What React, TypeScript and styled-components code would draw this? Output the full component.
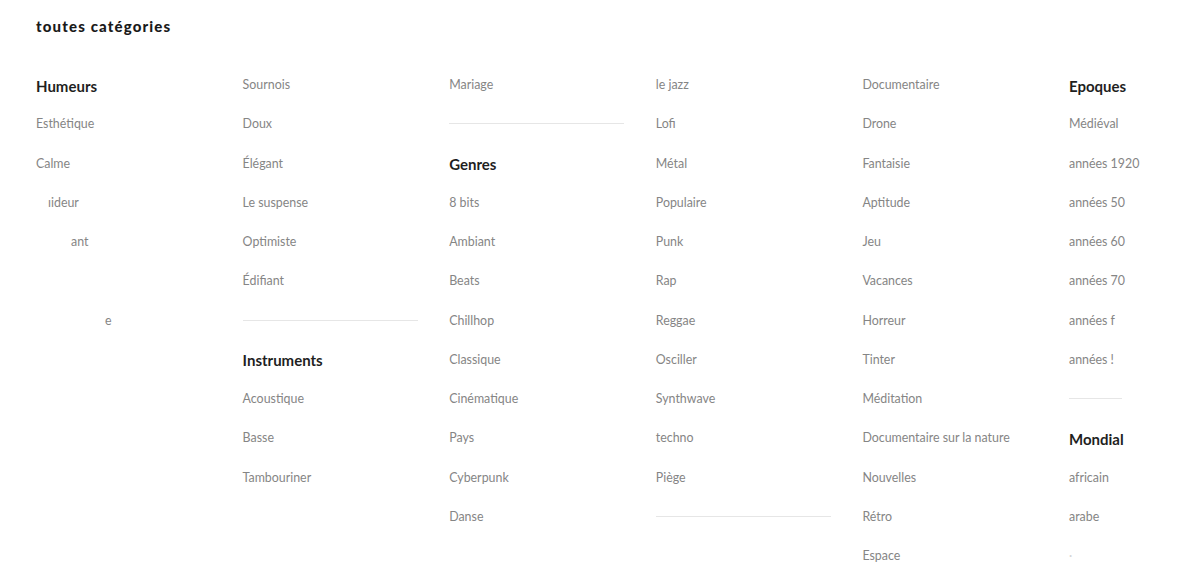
import styled, { createGlobalStyle } from 'styled-components';

type Entry =
  | { kind: 'heading', label: string }
  | { kind: 'item', label: string, indent?: number, faint?: boolean }
  | { kind: 'divider', width?: number }
  | { kind: 'blank' };

const h = (label: string): Entry => ({ kind: 'heading', label });
const i = (label: string, indent?: number): Entry => ({ kind: 'item', label, indent });
const divider = (width?: number): Entry => ({ kind: 'divider', width });
const blank: Entry = { kind: 'blank' };

const columns: Entry[][] = [
  [h('Humeurs'), i('Esthétique'), i('Calme'), i('ıideur', 12), i('ant', 35), blank, i('e', 69)],
  [
    i('Sournois'), i('Doux'), i('Élégant'), i('Le suspense'), i('Optimiste'), i('Édifiant'),
    divider(), h('Instruments'), i('Acoustique'), i('Basse'), i('Tambouriner'),
  ],
  [
    i('Mariage'), divider(), h('Genres'), i('8 bits'), i('Ambiant'), i('Beats'), i('Chillhop'),
    i('Classique'), i('Cinématique'), i('Pays'), i('Cyberpunk'), i('Danse'),
  ],
  [
    i('le jazz'), i('Lofi'), i('Métal'), i('Populaire'), i('Punk'), i('Rap'), i('Reggae'),
    i('Osciller'), i('Synthwave'), i('techno'), i('Piège'), divider(),
  ],
  [
    i('Documentaire'), i('Drone'), i('Fantaisie'), i('Aptitude'), i('Jeu'), i('Vacances'),
    i('Horreur'), i('Tinter'), i('Méditation'), i('Documentaire sur la nature'), i('Nouvelles'),
    i('Rétro'), i('Espace'),
  ],
  [
    h('Epoques'), i('Médiéval'), i('années 1920'), i('années 50'), i('années 60'), i('années 70'),
    i('années f'), i('années !'), divider(53), h('Mondial'), i('africain'), i('arabe'),
    { kind: 'item', label: '·', faint: true },
  ],
];

const App = () => (
  <>
    <GlobalStyle />
    <Page>
      <Title>toutes catégories</Title>
      <Columns>
        {columns.map((entries, colIndex) => (
          <Column key={colIndex}>
            {entries.map((entry, rowIndex) => {
              if (entry.kind === 'heading') {
                return <Heading key={rowIndex}>{entry.label}</Heading>;
              }
              if (entry.kind === 'divider') {
                return (
                  <Row key={rowIndex}>
                    <Rule $width={entry.width} />
                  </Row>
                );
              }
              if (entry.kind === 'blank') {
                return <Row key={rowIndex} />;
              }
              return (
                <Item key={rowIndex} $indent={entry.indent ?? 0} $faint={!!entry.faint}>
                  {entry.label}
                </Item>
              );
            })}
          </Column>
        ))}
      </Columns>
    </Page>
  </>
);

export default App;

const GlobalStyle = createGlobalStyle`
  html, body {
    margin: 0;
    padding: 0;
    background: #ffffff;
    overflow: hidden;
  }
  body {
    font-family: Lato, "Liberation Sans", sans-serif;
  }
`;

const Page = styled.div`
  width: 1200px;
  height: 573px;
  overflow: hidden;
  padding: 15px 0 0 36px;
  box-sizing: border-box;
`;

const Title = styled.h1`
  margin: 0;
  font-size: 15px;
  line-height: 22px;
  font-weight: 900;
  letter-spacing: 1.15px;
  color: #1a1a1a;
`;

const Columns = styled.div`
  display: grid;
  grid-template-columns: repeat(6, 175px);
  column-gap: 31.6px;
  margin-top: 28px;
`;

const Column = styled.div`
  display: flex;
  flex-direction: column;
`;

const Row = styled.div`
  height: 39.25px;
  display: flex;
  align-items: center;
`;

const Heading = styled(Row)`
  font-size: 15px;
  font-weight: 700;
  color: #1f1f1f;
  padding-top: 2px;
  box-sizing: border-box;
`;

const Item = styled(Row)<{ $indent: number, $faint: boolean }>`
  font-size: 12.4px;
  color: ${({ $faint }) => ($faint ? '#d6d6d6' : '#858585')};
  padding-left: ${({ $indent }) => $indent}px;
  white-space: nowrap;
`;

const Rule = styled.div<{ $width?: number }>`
  width: ${({ $width }) => ($width ? `${$width}px` : '100%')};
  height: 1px;
  background: #e6e6e6;
`;
